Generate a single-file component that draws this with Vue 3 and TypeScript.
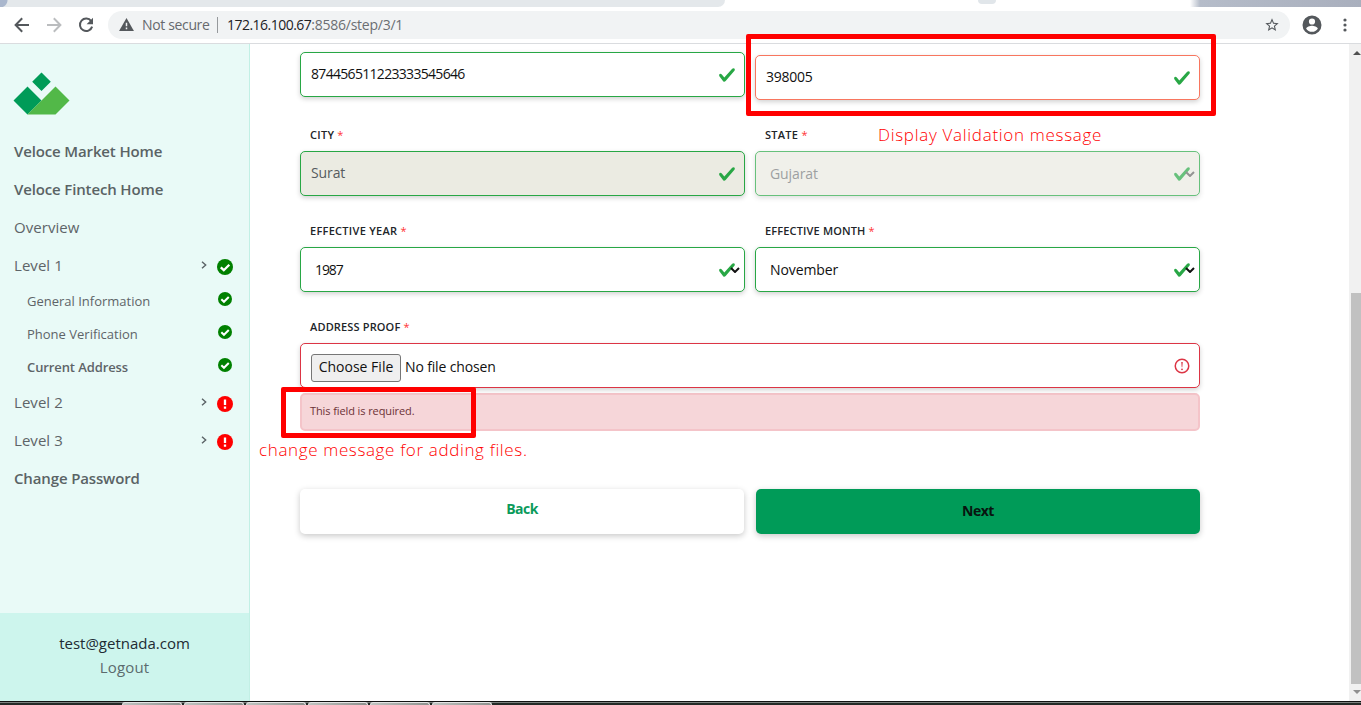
<script setup lang="ts">
interface NavItem {
  text: string
  kind: 'strong' | 'plain' | 'sub' | 'sub current'
  status?: 'ok' | 'error'
  expandable?: boolean
}
interface Field {
  id: string
  label?: string
  value: string
  kind: 'input' | 'select'
  state?: string
}

const nav: NavItem[] = [
  { text: 'Veloce Market Home', kind: 'strong' },
  { text: 'Veloce Fintech Home', kind: 'strong' },
  { text: 'Overview', kind: 'plain' },
  { text: 'Level 1', kind: 'plain', status: 'ok', expandable: true },
  { text: 'General Information', kind: 'sub', status: 'ok' },
  { text: 'Phone Verification', kind: 'sub', status: 'ok' },
  { text: 'Current Address', kind: 'sub current', status: 'ok' },
  { text: 'Level 2', kind: 'plain', status: 'error', expandable: true },
  { text: 'Level 3', kind: 'plain', status: 'error', expandable: true },
  { text: 'Change Password', kind: 'strong' },
]

const fields: Field[] = [
  { id: 'number', value: '874456511223333545646', kind: 'input' },
  { id: 'pin', value: '398005', kind: 'input', state: 'rejected' },
  { id: 'city', label: 'CITY', value: 'Surat', kind: 'input', state: 'readonly' },
  { id: 'state', label: 'STATE', value: 'Gujarat', kind: 'select', state: 'disabled' },
  { id: 'year', label: 'EFFECTIVE YEAR', value: '1987', kind: 'select' },
  { id: 'month', label: 'EFFECTIVE MONTH', value: 'November', kind: 'select' },
]
</script>

<template>
  <div class="window">
    <div class="tabs">
      <span class="tab-left"></span><span class="tab-active"></span><span class="tab-rest"></span>
    </div>
    <header class="toolbar">
      <svg class="tool back" viewBox="0 0 16 16"><path d="M15 8H2M8.2 1.3 1.6 8l6.6 6.7" /></svg>
      <svg class="tool forward" viewBox="0 0 16 16"><path d="M1 8h13M7.8 1.3 14.4 8l-6.6 6.7" /></svg>
      <svg class="tool reload" viewBox="0 0 16 16"><path d="M13.2 4.2A6.2 6.2 0 1 0 14.1 9.6" /><path class="solid" d="M15 .8v6.4H8.6z" /></svg>
      <div class="address">
        <svg class="warn" viewBox="0 0 16 14"><path d="M8 0 16 14H0z" /><path class="cut" d="M7.2 5h1.6v4H7.2zM7.2 10.3h1.6v1.7H7.2z" /></svg>
        <span class="insecure">Not secure</span>
        <span class="divider"></span>
        <span class="url"><b>172.16.100.67</b>:8586/step/3/1</span>
        <svg class="star" viewBox="0 0 24 24"><path d="M22 9.24l-7.19-.62L12 2 9.19 8.63 2 9.24l5.46 4.73L5.82 21 12 17.27 18.18 21l-1.63-7.03L22 9.24zM12 15.4l-3.76 2.27 1-4.28-3.32-2.88 4.38-.38L12 6.1l1.71 4.04 4.38.38-3.32 2.88 1 4.28L12 15.4z" /></svg>
      </div>
      <svg class="account" viewBox="0 0 20 20"><path d="M10 .5a9.5 9.5 0 1 0 0 19 9.5 9.5 0 0 0 0-19zm0 2.9a3.1 3.1 0 1 1 0 6.2 3.1 3.1 0 0 1 0-6.2zm0 13.4c-2.5 0-4.6-1.2-5.8-3.1.1-1.9 3.9-2.9 5.8-2.9s5.700 1 5.800 2.900A6.900 6.900 0 0 1 10 16.800z" /></svg>
      <svg class="more" viewBox="0 0 4 14"><circle cx="2" cy="2" r="1.600" /><circle cx="2" cy="7" r="1.600" /><circle cx="2" cy="12" r="1.600" /></svg>
    </header>

    <div class="page">
      <aside class="sidebar">
        <svg class="logo" viewBox="0 0 57 43">
          <path fill="#009b58" d="M28.500 .5l9.300 9.200-9.300 9.300-9.300-9.300zM14.500 14.500l14 14-14 14L.5 28.500z" />
          <path fill="#52b848" d="M42.500 14.500l14 14-14 14h-28z" />
        </svg>
        <nav>
          <a v-for="item in nav" :key="item.text" class="nav-item" :class="item.kind">
            <span class="nav-text">{{ item.text }}</span>
            <svg v-if="item.expandable" class="chevron" viewBox="0 0 6 8"><path d="M1 .7 4.700 4 1 7.300" /></svg>
            <svg v-if="item.status" class="status" :class="item.status" viewBox="0 0 16 16">
              <circle cx="8" cy="8" r="8" />
              <path v-if="item.status === 'ok'" d="M3.800 8.300 6.800 11.200 12.300 5.700" />
              <path v-else d="M8 3.400v5.700M8 10.600v2.200" />
            </svg>
          </a>
        </nav>
        <footer class="user">
          <span class="email">test@getnada.com</span>
          <a class="logout">Logout</a>
        </footer>
      </aside>

      <main class="content">
        <div class="form">
          <div v-for="f in fields" :key="f.id" class="field" :class="[f.kind, f.state]">
            <label v-if="f.label" :class="f.id">{{ f.label }} <i>*</i></label>
            <div class="control">
              <span class="value" :class="f.id">{{ f.value }}</span>
              <svg class="check" viewBox="0 0 8 8"><path d="M2.300 6.730L.6 4.530c-.4-1.040.46-1.400 1.100-.8l1.100 1.400 3.400-3.800c.6-.63 1.600-.27 1.200.7l-4 4.600c-.43.5-.8.4-1.100.1z" /></svg>
              <svg v-if="f.kind === 'select'" class="caret" viewBox="0 0 10 6"><path d="M1 1l4 4 4-4" /></svg>
            </div>
          </div>
          <div class="field file">
            <label class="proof">ADDRESS PROOF <i>*</i></label>
            <div class="control">
              <span class="choose"><span>Choose File</span></span>
              <span class="value none">No file chosen</span>
              <svg class="check invalid" viewBox="0 0 12 12"><circle class="ring" cx="6" cy="6" r="4.500" /><path d="M5.500 3.400h1L6.200 6.900h-.4z" /><circle cx="6" cy="8.200" r=".6" /></svg>
            </div>
          </div>
        </div>
        <div class="alert"><span>This field is required.</span></div>
        <div class="actions">
          <button class="btn-back" type="button">Back</button>
          <button class="btn-next" type="button">Next</button>
        </div>
      </main>

      <div class="scrollbar">
        <span class="arrow up"></span>
        <span class="thumb"></span>
        <span class="arrow down"></span>
      </div>
    </div>

    <div class="taskbar">
      <span v-for="n in 6" :key="n" class="task"></span>
    </div>

    <div class="mark mark-pin"></div>
    <div class="mark mark-file"></div>
    <span class="note note-pin">Display Validation message</span>
    <span class="note note-file">change message for adding files.</span>
  </div>
</template>

<style>
body { overflow: hidden; background: #fff; }
</style>

<style scoped>
.window { position: relative; width: 1361px; height: 705px; display: flex; flex-direction: column; overflow: hidden; background: #fff; font-family: "Open Sans", "Noto Sans", sans-serif; box-sizing: border-box; }
.window * { box-sizing: border-box; }
svg { display: block; flex: none; }
span, a, label { white-space: nowrap; }

.tabs { display: flex; height: 7px; flex: none; background: linear-gradient(90deg, #fff 0 1190px, #b5bcc9 1200px, #a9afbd 1361px); }
.tab-left { width: 725px; background: radial-gradient(circle at 0 0, #aab7cd 7px, #e4e8eb 8px); border-radius: 0 0 7px 0; margin-right: -1px; }
.tab-active { width: 254px; }
.tab-rest { width: 18px; height: 4px; background: #e1e6ea; border-radius: 0 0 9px 9px; }

.toolbar { height: 37px; flex: none; display: flex; align-items: center; padding: 0 12px 1px 14px; border-bottom: 1px solid #dadcdf; background: #fff; }
.tool { width: 16px; height: 16px; fill: none; stroke: #54585c; stroke-width: 2; }
.forward { margin-left: 16px; stroke: #bbbdbf; }
.reload { margin-left: 16px; }
.solid { fill: #54585c; stroke: none; }
.address { width: 1182px; height: 28px; margin-left: 14px; padding: 0 10px 0 11px; border-radius: 14px; background: #f1f3f4; display: flex; align-items: center; font-size: 14px; color: #66696d; }
.warn { width: 15px; height: 13px; fill: #54585c; }
.cut { fill: #f1f3f4; }
.insecure { margin-left: 8px; width: 67px; letter-spacing: -.35px; }
.divider { width: 1px; height: 16px; margin: 0 9px 0 8px; background: #96999c; }
.url { color: #6b6e72; letter-spacing: -.25px; }
.url b { font-weight: 400; color: #202124; letter-spacing: -.52px; }
.star { width: 16px; height: 16px; margin-left: auto; fill: #54585c; }
.account { width: 20px; height: 20px; margin-left: 12px; fill: #54585c; }
.more { width: 4px; height: 14px; margin-left: 21px; fill: #54585c; }

.page { height: 657px; flex: none; display: flex; }
.sidebar { width: 250px; flex: none; display: flex; flex-direction: column; background: #e9faf7; border-right: 1px solid #c2f0e5; }
.logo { width: 57px; height: 43px; margin: 28px 0 17px 13px; }
nav { padding: 0 16px 0 14px; }
.nav-item { display: flex; align-items: center; height: 38px; font-size: 15px; letter-spacing: .05px; color: #5e6468; }
.nav-text { flex: 1; }
.strong { font-weight: 600; letter-spacing: -.14px; color: #5a6365; }
.sub { height: 33px; padding-left: 13px; font-size: 13px; letter-spacing: 0; }
.current { font-weight: 600; letter-spacing: -.1px; }
.chevron { width: 6px; height: 8px; margin-right: 10px; fill: none; stroke: #5a6266; stroke-width: 1.400; }
.status { width: 16px; height: 16px; fill: green; position: relative; top: 2px; }
.status path { fill: none; stroke: #fff; stroke-width: 2.300; }
.status.error { fill: red; }
.sub .status { width: 14px; height: 14px; margin-right: 1px; top: -2px; }
.user { margin-top: auto; height: 88px; padding-top: 18px; background: #cdf5ed; display: flex; flex-direction: column; align-items: center; font-size: 15px; line-height: 24px; letter-spacing: 0; color: #212b33; }
.logout { color: #5b6b6d; letter-spacing: .15px; }

.content { flex: 1; padding: 8px 149px 0 50px; }
.form { display: grid; grid-template-columns: 445px 445px; column-gap: 10px; }
.field { display: flex; flex-direction: column; justify-content: flex-end; height: 96px; }
.field:nth-child(-n+2) { height: 48px; justify-content: flex-start; }
.field.rejected { padding-top: 3px; }
label { padding-left: 10px; height: 25px; line-height: 18px; font-size: 11px; font-weight: 600; color: #212529; letter-spacing: .28px; }
label.month, label.proof { letter-spacing: .15px; }
label i { font-style: normal; font-weight: 400; color: #f33; }
.control { position: relative; display: flex; align-items: center; height: 45px; flex: none; padding: 0 9px 0 10px; border: 1px solid #28a745; border-radius: 5px; background: #fff; box-shadow: 0 2px 5px rgba(0, 0, 0, .18); font-size: 14px; color: #111; }
.value { position: relative; top: -1px; letter-spacing: -.1px; }
.value.number { letter-spacing: -.69px; }
.value.pin { letter-spacing: -.25px; }
.value.year { letter-spacing: -1.100px; }
.check { width: 18px; height: 18px; margin-left: auto; margin-right: -.5px; fill: #28a745; }
.select .control { padding: 0 4px 0 14px; }
.select .value { top: 0; }
.caret { width: 10px; height: 6px; margin-left: -6px; fill: none; stroke: #111; stroke-width: 2; }
.select .check { margin-right: 0; }
.rejected .control { border-color: #f8765f; }
.readonly .control { background: #ebebe2; color: #565b5e; }
.disabled .control { opacity: .7; background: #ebebe2; color: #74787a; }
.disabled .caret { stroke: #666; }
.file { grid-column: 1 / -1; }
.file .control { border-color: #dc3545; }
.choose { width: 90px; height: 28px; display: flex; align-items: center; justify-content: center; margin-top: 4px; border: 1px solid #767676; border-radius: 3px; background: #efefef; }
.none { margin-left: 4px; top: 1px; letter-spacing: -.15px; }
.choose span { position: relative; top: -1px; }
.invalid { fill: #dc3545; }
.ring { fill: none; stroke: #dc3545; }
.alert { height: 38px; width: 900px; margin-top: 5px; padding: 0 8px; border: 2px solid #f4c4c9; border-radius: 5px; background: #f6d6d9; color: #6c3236; font-size: 11px; line-height: 32px; letter-spacing: -.1px; }
.actions { width: 900px; margin-top: 58px; display: grid; grid-template-columns: 444px 444px; gap: 12px; }
button { height: 45px; border: 0; border-radius: 5px; background: #fff; font: 700 14px "Open Sans", sans-serif; letter-spacing: -.5px; color: #0b9b5b; box-shadow: 0 2px 6px rgba(0, 0, 0, .22); padding: 0 0 6px; }
.btn-next { background: #009b58; color: #08150f; padding-bottom: 3px; }

.scrollbar { width: 12px; flex: none; display: flex; flex-direction: column; align-items: flex-end; background: #f1f1f1; }
.arrow { width: 0; height: 0; border: 4px solid transparent; }
.up { margin: 3px 0 0; border-bottom-color: #505050; }
.thumb { width: 10px; height: 391px; margin-top: auto; background: #c1c1c1; }
.down { margin: 6px 0 3px; border-top-color: #909090; }

.taskbar { flex: 1; display: flex; gap: 2px; padding-left: 122px; border-top: 1px solid #111; background: linear-gradient(#7d827f 0 1px, #252b28 1px); }
.task { width: 60px; height: 4px; background: linear-gradient(90deg, #bfc3c0, #8d918e); border: 1px solid #e4e4e4; border-bottom: 0; border-radius: 3px 3px 0 0; }

.mark { position: absolute; border: 5px solid #f00; border-radius: 2px; }
.mark-pin { left: 746px; top: 34px; width: 470px; height: 82px; }
.mark-file { left: 281px; top: 387px; width: 195px; height: 51px; }
.note { position: absolute; color: #f00; font-family: "Open Sans", sans-serif; font-weight: 350; font-size: 17px; line-height: 22px; }
.note-pin { left: 878px; top: 124px; letter-spacing: .7px; }
.note-file { left: 259px; top: 439px; letter-spacing: .64px; }
</style>
